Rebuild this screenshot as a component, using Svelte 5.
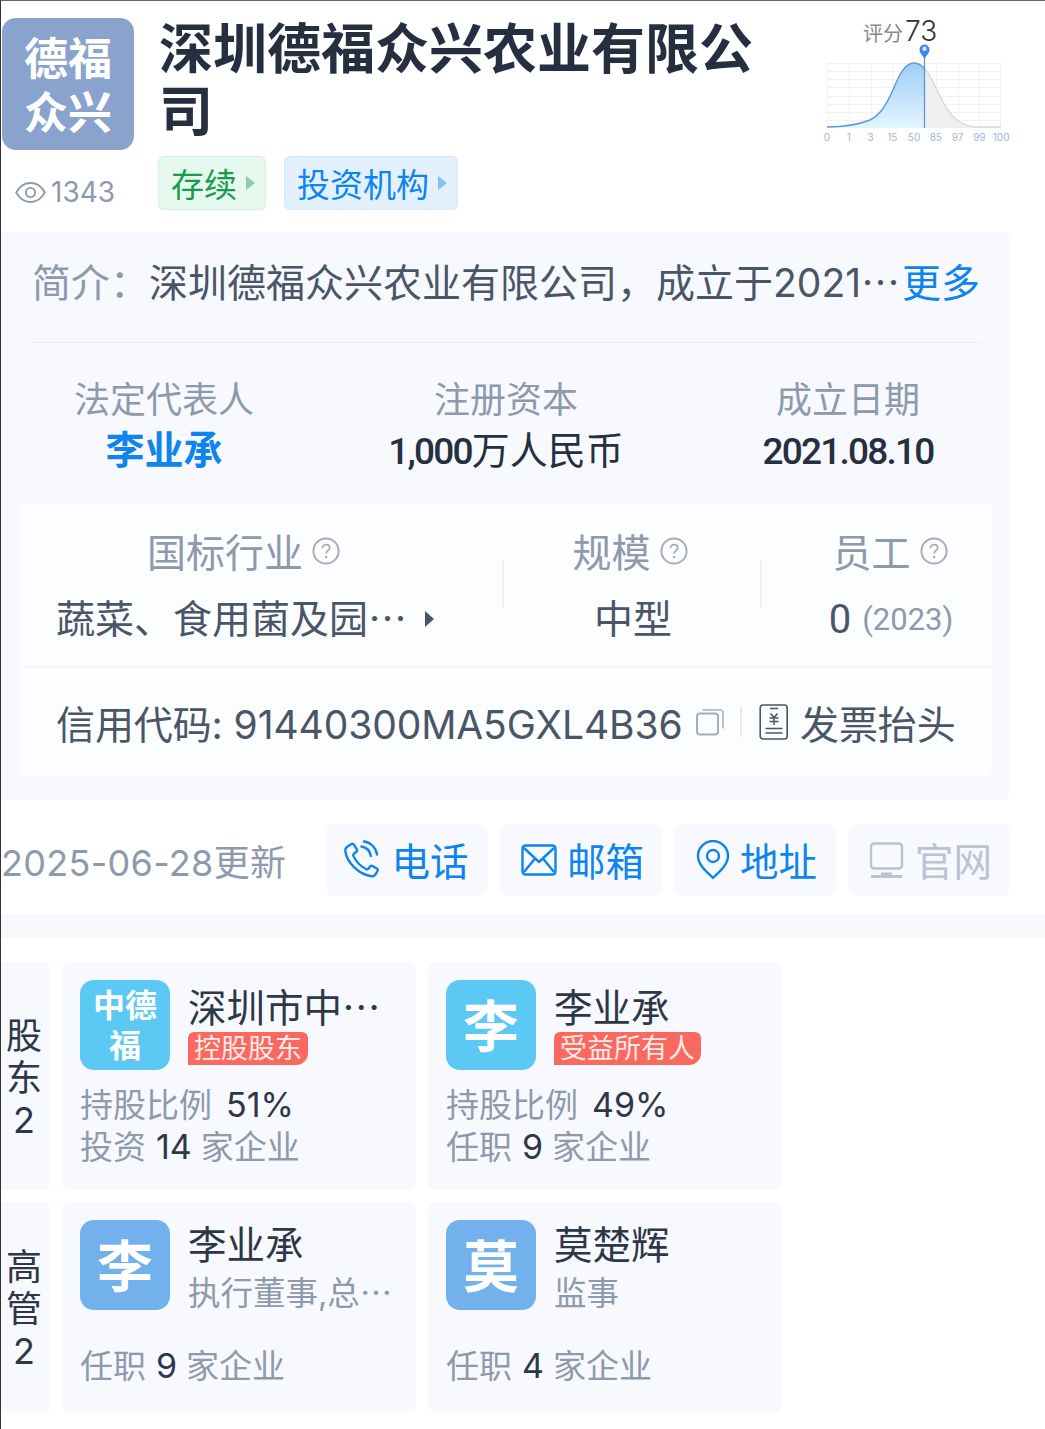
<script>
    const tags = [
        { text: '存续', cls: 'green' },
        { text: '投资机构', cls: 'blue' },
    ];
    const axis = ['0', '1', '3', '15', '50', '85', '97', '99', '100'];
    const facts = [
        { label: '法定代表人', unit: '李业承', link: true },
        { label: '注册资本', num: '1,000', unit: '万人民币' },
        { label: '成立日期', num: '2021.08.10' },
    ];
    const actions = [
        { text: '电话', icon: 'phone' },
        { text: '邮箱', icon: 'mail' },
        { text: '地址', icon: 'pin' },
        { text: '官网', icon: 'web', off: true },
    ];
    const groups = [
        {
            title: ['股', '东', '2'],
            cls: 'tall',
            people: [
                { logo: '中德福', small: true, color: 'sky', name: '深圳市中⋯', tag: '控股股东', lines: [['持股比例', '51%', ''], ['投资', '14', '家企业']] },
                { logo: '李', color: 'sky', name: '李业承', tag: '受益所有人', lines: [['持股比例', '49%', ''], ['任职', '9', '家企业']] },
            ],
        },
        {
            title: ['高', '管', '2'],
            cls: 'short',
            people: [
                { logo: '李', color: 'sea', name: '李业承', sub: '执行董事,总⋯', lines: [['任职', '9', '家企业']] },
                { logo: '莫', color: 'sea', name: '莫楚辉', sub: '监事', lines: [['任职', '4', '家企业']] },
            ],
        },
    ];
</script>

{#snippet help()}
    <svg class="help" viewBox="0 0 28 28" width="28" height="28">
        <circle cx="14" cy="14" r="12.6" fill="none" stroke="#a9adb5" stroke-width="2" />
        <path d="M10.4 11.2c0-2.2 1.6-3.6 3.7-3.6s3.6 1.3 3.6 3.2c0 2.8-3.6 2.9-3.6 5.8" fill="none" stroke="#a9adb5" stroke-width="1.8" />
        <circle cx="14.1" cy="20" r="1.2" fill="#a9adb5" />
    </svg>
{/snippet}

<div class="page" lang="zh-CN">
    <header>
        <div class="brand">
            <div class="logo">德福<br />众兴</div>
            <div class="views">
                <svg viewBox="0 0 31 23" width="31" height="23">
                    <path d="M1.2 11.5C4.5 5.4 9.6 2 15.5 2s11 3.4 14.3 9.5C26.5 17.6 21.4 21 15.5 21S4.5 17.6 1.2 11.5Z" fill="none" stroke="#8e99ad" stroke-width="1.8" />
                    <circle cx="15.5" cy="11.5" r="4.6" fill="none" stroke="#8e99ad" stroke-width="1.8" />
                </svg>
                <span>1343</span>
            </div>
        </div>
        <div class="headline">
            <h1>深圳德福众兴农业有限公司</h1>
            <div class="tags">
                {#each tags as tag}
                    <span class="tag {tag.cls}">{tag.text}<i class="caret"></i></span>
                {/each}
            </div>
        </div>
        <div class="score">
            <div class="score-text"><span>评分</span><b>73</b></div>
            <svg viewBox="0 0 200 100" width="200" height="100">
                <defs>
                    <linearGradient id="area" x1="0" y1="0" x2="0" y2="1">
                        <stop offset="0" stop-color="#9fcdf7" />
                        <stop offset="1" stop-color="#e2f6fe" />
                    </linearGradient>
                </defs>
                <g stroke="#f0f1f3" stroke-width="1" fill="none">
                    <path d="M7 23.5h174M7 31.5h174M7 39.5h174M7 47.5h174M7 56.5h174M7 64.5h174M7 72.5h174M7 80.5h174" />
                    <path d="M7.5 23v65M29.5 23v65M51.5 23v65M72.5 23v65M94.5 23v65M116.5 23v65M138.5 23v65M159.5 23v65M180.5 23v65" />
                </g>
                <path d="M104 28C110 33 113 43 117 50C122 60 125 67 130 73C135 80 145 87 157 87L181 87V88H104Z" fill="#efefef" />
                <path d="M104 28C110 33 113 43 117 50C122 60 125 67 130 73C135 80 145 87 157 87L181 87" fill="none" stroke="#dadada" stroke-width="1.5" />
                <path d="M7 87C20 87 35 86 50 80C58 76 64 70 73 50C78 38 84 23 94 23C98 23 101 25 104 28V88H7Z" fill="url(#area)" />
                <path d="M7 87C20 87 35 86 50 80C58 76 64 70 73 50C78 38 84 23 94 23C98 23 101 25 104 28" fill="none" stroke="#5a9be2" stroke-width="1.5" />
                <path d="M104.5 12v76" stroke="#5a8fe0" stroke-width="1.2" />
                <path d="M104.5 19c-1.5-3.5-5-5.5-5-9.5a5 5 0 0 1 10 0c0 4-3.5 6-5 9.5Z" fill="#3f86e8" />
                <circle cx="104.5" cy="8.8" r="2.2" fill="#cfe4fb" />
            </svg>
            <div class="score-axis">
                {#each axis as tick}
                    <span>{tick}</span>
                {/each}
            </div>
        </div>
    </header>

    <section class="panel">
        <div class="intro">
            <span class="intro-label">简介：</span>
            <span class="intro-text">深圳德福众兴农业有限公司，成立于2021⋯</span>
            <span class="more">更多</span>
        </div>
        <div class="facts">
            {#each facts as fact}
                <div class="fact">
                    <div class="fact-label">{fact.label}</div>
                    <div class="fact-value" class:link={fact.link}><span class="num">{fact.num ?? ''}</span>{fact.unit ?? ''}</div>
                </div>
            {/each}
        </div>
        <div class="inner">
            <div class="stats">
                <div class="stat first">
                    <div class="stat-label">国标行业 {@render help()}</div>
                    <div class="stat-value industry">蔬菜、食用菌及园⋯<i class="caret dark"></i></div>
                </div>
                <div class="stat second">
                    <div class="stat-label">规模 {@render help()}</div>
                    <div class="stat-value">中型</div>
                </div>
                <div class="stat third">
                    <div class="stat-label">员工 {@render help()}</div>
                    <div class="stat-value"><span class="zero">0</span> <small>(2023)</small></div>
                </div>
            </div>
            <div class="credit">
                <span class="code">信用代码: 91440300MA5GXL4B36</span>
                <svg class="copy" viewBox="0 0 28 28" width="28" height="28">
                    <rect x="1" y="5.5" width="21" height="21" rx="3" fill="none" stroke="#a5aebf" stroke-width="2" />
                    <path d="M6.5 2h17.5a3 3 0 0 1 3 3v15.5" fill="none" stroke="#bcc4d1" stroke-width="2" />
                </svg>
                <i class="rule"></i>
                <svg class="bill" viewBox="0 0 30 36" width="30" height="36">
                    <rect x="1.2" y="1" width="27" height="34" rx="3" fill="none" stroke="#4a5568" stroke-width="1.6" />
                    <path d="M11 4.5h8M11.5 9.5l3.5 4 3.5-4M10.5 14h9M10.5 17.5h9M15 13.5v7.5M6.5 24.5h17M6.5 29h17" fill="none" stroke="#4a5568" stroke-width="1.5" />
                </svg>
                <span class="invoice">发票抬头</span>
            </div>
        </div>
    </section>

    <div class="actions">
        <span class="updated">2025-06-28更新</span>
        <div class="buttons">
            {#each actions as action}
                <div class="action {action.icon}" class:off={action.off}>
                    {#if action.icon === 'phone'}
                        <svg viewBox="0 0 40 40" width="40" height="40" fill="none" stroke="currentColor" stroke-width="2.4" stroke-linejoin="round" stroke-linecap="round">
                            <path d="M6.5 6.5 10.5 4c1-.6 1.9-.3 2.5.6l2.8 5c.5 1 .3 1.9-.6 2.5l-2.4 1.7c-.6.5-.8 1.1-.5 1.8 2.6 6 7 10.5 13 13.6.8.4 1.5.2 2-.4l1.8-2.3c.6-.8 1.5-1 2.4-.5l4.4 2.5c1 .6 1.2 1.5.6 2.5l-2 3.4c-.8 1.3-2.1 2-3.6 1.8C18 35 5.8 22.5 4.3 11c-.2-1.9.6-3.4 2.2-4.5Z" />
                            <path d="M20.5 6.5c4.8.8 8.4 4.2 9.3 9.5M23 1.5c6.7 1 12 6 13 13" />
                        </svg>
                    {:else if action.icon === 'mail'}
                        <svg viewBox="0 0 36 32" width="36" height="32" fill="none" stroke="currentColor" stroke-width="2.4" stroke-linejoin="round">
                            <rect x="1.5" y="1.5" width="33" height="29" rx="3" />
                            <path d="M3 4l15 14L33 4M3 28l11-13.5M33 28 22 14.5" />
                        </svg>
                    {:else if action.icon === 'pin'}
                        <svg viewBox="0 0 34 40" width="34" height="40" fill="none" stroke="currentColor" stroke-width="2.4">
                            <path d="M17 38C11 32 2 25 2 16a15 15 0 0 1 30 0c0 9-9 16-15 22Z" stroke-linejoin="round" />
                            <circle cx="17" cy="16" r="6" />
                        </svg>
                    {:else}
                        <svg viewBox="0 0 36 36" width="36" height="36" fill="none" stroke="currentColor" stroke-width="2.4">
                            <rect x="2" y="1.5" width="31" height="25" rx="3" />
                            <path d="M2 34.5h31M12 32h11" stroke-width="3" />
                        </svg>
                    {/if}
                    <span>{action.text}</span>
                </div>
            {/each}
        </div>
    </div>

    <div class="band"></div>

    {#each groups as group}
        <div class="group {group.cls}">
            <div class="side">
                {#each group.title as ch}
                    <span>{ch}</span>
                {/each}
            </div>
            {#each group.people as person}
                <div class="person">
                    <div class="person-top">
                        <div class="avatar {person.color}" class:small={person.small}>{person.logo}</div>
                        <div class="person-info">
                            <div class="name">{person.name}</div>
                            {#if person.tag}
                                <span class="badge">{person.tag}</span>
                            {:else}
                                <div class="sub">{person.sub}</div>
                            {/if}
                        </div>
                    </div>
                    <div class="lines">
                        {#each person.lines as line}
                            <div class="line"><span>{line[0]}</span><b class:ratio={!line[2]}>{line[1]}</b><span>{line[2]}</span></div>
                        {/each}
                    </div>
                </div>
            {/each}
        </div>
    {/each}
</div>

<style>
    :global(body) {
        background: #fff;
    }

    .page {
        box-sizing: border-box;
        width: 1045px;
        height: 1429px;
        overflow: hidden;
        border-top: 1px solid #666;
        border-left: 1px solid #333;
        font-family: Inter, "Noto Sans CJK SC", sans-serif;
        color: #2d3748;
    }

    /* cabecera */
    header {
        display: flex;
        height: 231px;
    }

    .brand {
        width: 158px;
        flex: none;
        padding: 17px 0 0 1px;
        box-sizing: border-box;
    }

    .logo {
        width: 132px;
        height: 132px;
        border-radius: 14px;
        background: #8aa3cc;
        color: #fff;
        font-size: 44px;
        line-height: 54px;
        font-weight: 700;
        text-align: center;
        padding-top: 14px;
        box-sizing: border-box;
    }

    .views {
        display: flex;
        align-items: center;
        gap: 5px;
        margin: 25px 0 0 13px;
        font-size: 28px;
        line-height: 34px;
        color: #8e99ad;
    }

    .headline {
        width: 631px;
        flex: none;
    }

    h1 {
        margin: 18px 0 0;
        font-size: 54px;
        line-height: 62px;
        font-weight: 700;
        color: #252f3f;
    }

    .tags {
        display: flex;
        gap: 18px;
        margin: 13px 0 0 -1px;
    }

    .tag {
        display: flex;
        align-items: center;
        height: 54px;
        box-sizing: border-box;
        padding: 0 10px 0 12px;
        border-radius: 6px;
        border: 1px solid;
        font-size: 33px;
    }

    .tag.green {
        background: #e6f9ee;
        border-color: #d6f1e0;
        color: #1a9a4d;
    }

    .tag.blue {
        background: #e3f1fe;
        border-color: #d6e9fa;
        color: #0e84ee;
    }

    .caret {
        display: inline-block;
        width: 0;
        height: 0;
        margin-left: 9px;
        border-left: 9px solid currentColor;
        border-top: 7px solid transparent;
        border-bottom: 7px solid transparent;
        opacity: 0.45;
    }

    .caret.dark {
        margin-left: 18px;
        opacity: 1;
        border-left-width: 9px;
        border-top-width: 8px;
        border-bottom-width: 8px;
        color: #4a5568;
    }

    .score {
        margin-left: 30px;
        width: 200px;
        flex: none;
    }

    .score-text {
        display: flex;
        align-items: baseline;
        height: 39px;
        padding: 13px 0 0 43px;
        box-sizing: border-box;
        color: #333;
        font-size: 28px;
        line-height: 34px;
    }

    .score-text span {
        font-size: 20px;
        color: #888;
        margin-right: 2px;
    }

    .score-text b {
        font-weight: 300;
    }

    .score svg {
        display: block;
    }

    .score-axis {
        display: flex;
        width: 196px;
        margin: -9px 0 0 -4px;
        font-size: 10px;
        line-height: 12px;
        color: #9bb5dc;
    }

    .score-axis span {
        width: 21.8px;
        text-align: center;
    }

    /* panel de datos */
    .panel {
        width: 1009px;
        height: 568px;
        background: #f7f9fe;
        border-radius: 0 8px 8px 0;
        overflow: hidden;
    }

    .intro {
        display: flex;
        align-items: center;
        height: 96px;
        padding-bottom: 14px;
        margin: 0 30px 0 31px;
        border-bottom: 1px solid #e9ecf2;
        font-size: 39px;
        white-space: nowrap;
    }

    .intro-label {
        width: 117px;
        color: #8e99ad;
        flex: none;
    }

    .intro-text {
        color: #4a5568;
        flex: 1;
    }

    .more {
        color: #0e84ee;
    }

    .facts {
        display: grid;
        grid-template-columns: repeat(3, 342px);
        margin: 32px 0 0 -8px;
        height: 128px;
        text-align: center;
    }

    .fact-label {
        font-size: 36px;
        line-height: 50px;
        color: #8e99ad;
    }

    .fact-value {
        font-size: 38px;
        line-height: 50px;
        color: #252f3f;
    }

    .num {
        font-family: Roboto, sans-serif;
        font-size: 37px;
        font-weight: 500;
        letter-spacing: -1.8px;
    }

    .fact-value.link {
        color: #0e84ee;
        font-size: 39px;
        font-weight: 700;
    }

    .inner {
        margin: 0 18px 0 19px;
        height: 273px;
        background: #fcfdff;
        border-radius: 8px;
    }

    .stats {
        display: flex;
        height: 163px;
        border-bottom: 2px solid #f3f5f9;
    }

    .stat {
        box-sizing: border-box;
        padding-top: 25px;
        position: relative;
    }

    .stat.first {
        width: 482px;
        padding-left: 36px;
    }

    .stat.second {
        width: 258px;
        text-align: center;
    }

    .stat.third {
        flex: 1;
        text-align: center;
        padding-left: 30px;
    }

    .stat.second::before,
    .stat.third::before {
        content: "";
        position: absolute;
        left: 0;
        top: 57px;
        height: 48px;
        width: 2px;
        background: #eef0f5;
    }

    .stat-label {
        display: flex;
        align-items: center;
        justify-content: center;
        gap: 9px;
        font-size: 39px;
        line-height: 50px;
        color: #8e99ad;
    }

    .first .stat-label {
        justify-content: flex-start;
        padding-left: 91px;
    }

    .second .stat-label,
    .third .stat-label {
        padding-right: 2px;
    }

    .second .stat-value {
        padding-left: 4px;
    }

    .help {
        flex: none;
        margin-top: -4px;
    }

    .stat-value {
        margin-top: 15px;
        font-size: 39px;
        line-height: 52px;
        color: #4a5568;
        white-space: nowrap;
    }

    .industry {
        display: flex;
        align-items: center;
    }

    .zero {
        font-family: Roboto, sans-serif;
        font-size: 40px;
    }

    small {
        font-family: Roboto, sans-serif;
        font-size: 31px;
        color: #8e99ad;
        position: relative;
        top: -3px;
    }

    .credit {
        display: flex;
        align-items: center;
        height: 108px;
        padding-left: 36px;
        font-size: 39px;
        letter-spacing: -0.1px;
        color: #4a5568;
        white-space: nowrap;
    }

    .code {
        width: 626px;
        flex: none;
    }

    .copy {
        margin-left: 14px;
        flex: none;
    }

    .rule {
        width: 2px;
        height: 30px;
        margin: 0 17px 0 16px;
        background: #e6e9ef;
    }

    .bill {
        flex: none;
    }

    .invoice {
        margin-left: 11px;
    }

    /* acciones */
    .actions {
        display: flex;
        align-items: center;
        justify-content: space-between;
        width: 1009px;
        margin-top: 24px;
    }

    .updated {
        font-size: 36px;
        letter-spacing: 0.3px;
        color: #8e99ad;
    }

    .buttons {
        display: flex;
        gap: 12px;
    }

    .action {
        display: flex;
        align-items: center;
        justify-content: center;
        box-sizing: border-box;
        gap: 10px;
        width: 162px;
        height: 72px;
        padding-left: 3px;
        border-radius: 8px;
        background: #f7f9fe;
        color: #0e84ee;
        font-size: 38.5px;
    }

    .action.phone {
        padding: 0 4px 0 0;
    }

    .action span {
        margin-top: -3px;
    }

    .action.off {
        color: #bcc3d0;
    }

    .band {
        height: 24px;
        margin-top: 18px;
        background: #f8f9fd;
    }

    /* personas */
    .group {
        display: flex;
        gap: 12px;
        margin-bottom: 12px;
    }

    .group.tall {
        margin-top: 24px;
        height: 228px;
    }

    .group.short {
        height: 210px;
    }

    .side {
        display: flex;
        flex-direction: column;
        align-items: center;
        justify-content: center;
        box-sizing: border-box;
        width: 49px;
        padding: 4px 3px 0 0;
        border-radius: 0 6px 6px 0;
        background: #f7f9fe;
        font-size: 36px;
        line-height: 42px;
        color: #2d3748;
    }

    .person {
        box-sizing: border-box;
        width: 354px;
        padding: 18px 0 0 18px;
        border-radius: 8px;
        background: #f7f9fe;
    }

    .person-top {
        display: flex;
        gap: 18px;
    }

    .avatar {
        display: flex;
        align-items: center;
        justify-content: center;
        box-sizing: border-box;
        flex: none;
        width: 90px;
        height: 90px;
        padding-bottom: 6px;
        border-radius: 14px;
        color: #fff;
        font-size: 56px;
        font-weight: 700;
        text-align: center;
    }

    .avatar.small {
        padding: 2px 0 0;
        font-size: 32px;
        line-height: 40px;
    }

    .avatar.sky {
        background: #5cc9f5;
    }

    .avatar.sea {
        background: #72b1ec;
    }

    .person-info {
        min-width: 0;
    }

    .name {
        padding-top: 3px;
        font-size: 38.5px;
        line-height: 50px;
        color: #2d3748;
        white-space: nowrap;
    }

    .short .name {
        padding-top: 0;
    }

    .badge {
        display: inline-block;
        margin: -1px 0 0;
        padding: 0 6px;
        height: 33px;
        line-height: 33px;
        border-radius: 6px 6px 12px 0;
        background: #f9695f;
        color: #ffeae8;
        font-size: 27px;
        vertical-align: top;
    }

    .sub {
        padding-top: 2px;
        font-size: 32.5px;
        line-height: 44px;
        color: #8e99ad;
        white-space: nowrap;
    }

    .lines {
        margin-top: 14px;
    }

    .short .lines {
        margin-top: 29px;
    }

    .line {
        display: flex;
        align-items: baseline;
        font-size: 33px;
        line-height: 42px;
        color: #8e99ad;
        white-space: nowrap;
    }

    .line b {
        font-weight: 400;
        font-size: 34px;
        color: #2d3748;
        margin: 0 9px 0 10px;
    }

    .line b.ratio {
        margin-left: 14px;
    }
</style>
